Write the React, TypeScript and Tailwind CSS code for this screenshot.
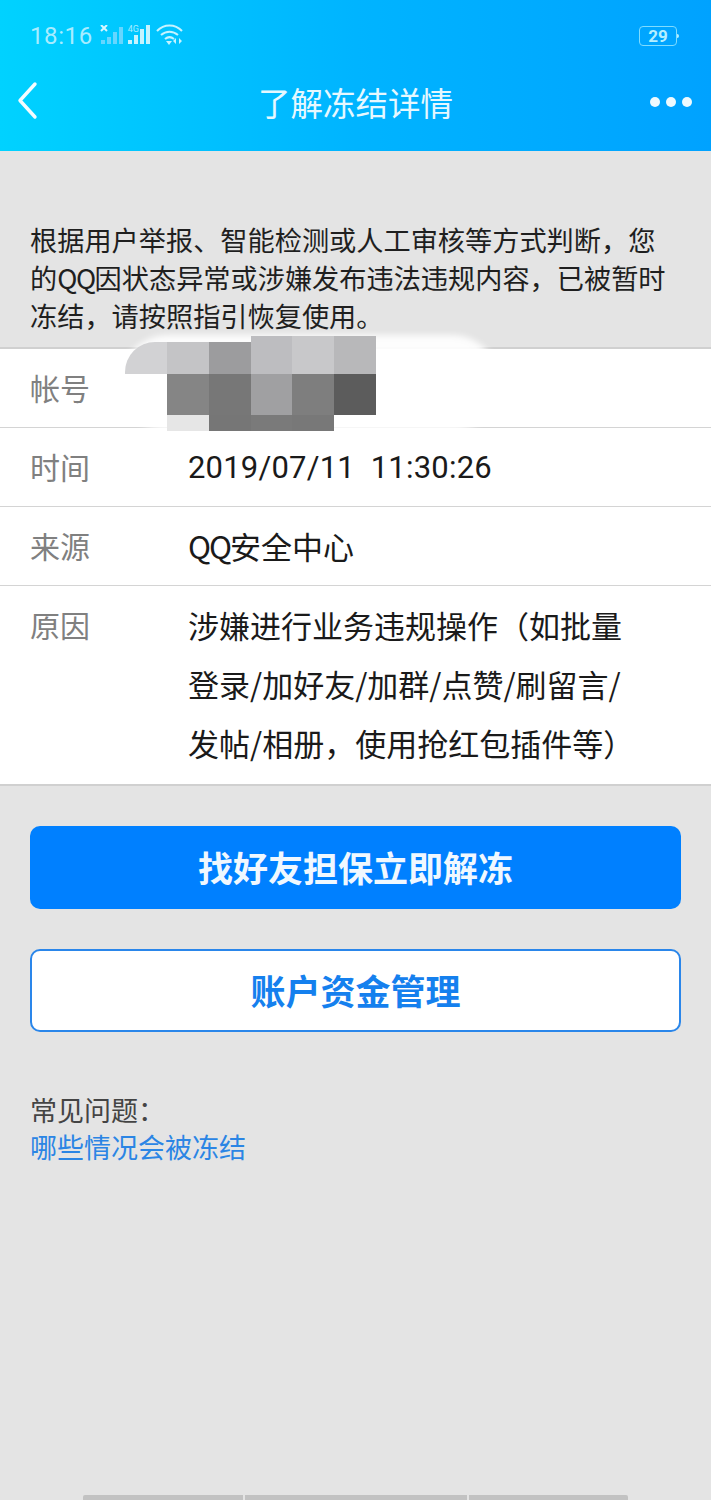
const font = { fontFamily: '"Noto Sans CJK SC", "Noto Sans", sans-serif' }

// mosaic over the account number, colours read off the reference
const mosaic = [
  { top: '-top-[6px]', h: 'h-[38px] items-end', cells: ['h-[32px] bg-[#c4c4c6]', 'h-[32px] bg-[#9c9c9e]', 'h-full bg-[#bdbdc0]', 'h-full bg-[#c8c8ca]', 'h-full bg-[#b8b8ba]'] },
  { top: 'top-[32px]', h: 'h-[41px]', cells: ['h-full bg-[#858585]', 'h-full bg-[#777777]', 'h-full bg-[#a0a0a2]', 'h-full bg-[#7e7e7e]', 'h-full bg-[#5c5c5c]'] },
  { top: 'top-[73px]', h: 'h-[16px]', cells: ['h-full bg-[#e6e6e6]', 'h-full bg-[#767676]', 'h-full bg-[#7a7a7a]', 'h-full bg-[#787878]', 'h-full bg-transparent'] },
]

function StatusBar() {
  return (
    <div className="flex h-[72px] items-start justify-between pt-[20px] pl-[30px] pr-[32px]">
      <div className="flex items-center gap-[7px] text-[#a8ecff]">
        <span className="text-[24px] leading-[32px] tracking-[0.6px]" style={{ fontFamily: 'Roboto, sans-serif' }}>18:16</span>
        <svg width="23" height="20" viewBox="0 0 23 20" className="-mt-[2px]">
          <path d="M1 0l6 6M7 0L1 6" stroke="#d5f6ff" strokeWidth="2" />
          <rect x="1" y="15" width="4" height="4" fill="#66d6ff" />
          <rect x="7" y="12" width="4" height="7" fill="#66d6ff" />
          <rect x="13" y="7" width="4" height="12" fill="#66d6ff" />
          <rect x="19" y="2" width="4" height="17" fill="#66d6ff" />
        </svg>
        <div className="relative -ml-[2px] -mt-[2px] h-[20px] w-[22px]">
          <span className="absolute -top-[1px] left-0 text-[9px] leading-[10px]" style={{ fontFamily: 'Roboto, sans-serif' }}>4G</span>
          <svg width="22" height="20" viewBox="0 0 22 20" className="absolute left-0 top-0">
            <rect x="0" y="15" width="4" height="4" fill="#c5f3ff" />
            <rect x="6" y="10" width="4" height="9" fill="#c5f3ff" />
            <rect x="12" y="4" width="4" height="15" fill="#c5f3ff" />
            <rect x="18" y="0" width="4" height="19" fill="#c5f3ff" />
          </svg>
        </div>
        <svg width="27" height="22" viewBox="0 0 27 22" className="-mt-[2px] -ml-[1px]" fill="none" stroke="#c5f3ff" strokeWidth="2">
          <path d="M1 7c7-7.500 18-7.500 25 0" />
          <path d="M5 11c5-4.500 12-4.500 17 0" />
          <path d="M9 15c3-2.500 6-2.500 9 0" />
          <path d="M10 17h6l-3 4z" fill="#c5f3ff" stroke="none" />
          <path d="M20 14l-3 3 3 3zM23 14l3 3-3 3z" fill="#c5f3ff" stroke="none" />
        </svg>
      </div>
      <div className="mt-[6px] flex items-center">
        <div className="flex h-[20px] w-[38px] items-center justify-center rounded-[4px] border border-[#7fdcff] text-[17px] font-bold leading-none text-[#b5efff]" style={{ fontFamily: 'Roboto, sans-serif' }}>
          29
        </div>
        <div className="h-[4px] w-[2px] rounded-r-sm bg-[#b5efff]" />
      </div>
    </div>
  )
}

function Row({ label, border = true, children }: { label: string; border?: boolean; children: React.ReactNode }) {
  return (
    <div className={`flex pl-[30px] ${border ? 'border-b border-[#d4d4d4]' : 'pb-[2px]'}`}>
      <div className="w-[158px] shrink-0 pt-[8.500px] pb-[10.500px] text-[30px] leading-[59px] text-[#808080]">{label}</div>
      <div className="pt-[8.500px] pb-[10.500px] text-[31px] leading-[59px] text-[#1a1a1a]">{children}</div>
    </div>
  )
}

export default function App() {
  return (
    <div className="relative flex h-[1500px] flex-col overflow-hidden bg-[#e4e4e4]" style={font}>
      <header className="h-[151px] shrink-0 bg-gradient-to-r from-[#00d2ff] via-[#00b4ff] to-[#00a2ff]">
        <StatusBar />
        <div className="relative flex h-[60px] items-center justify-center">
          <svg width="24" height="40" viewBox="0 0 24 40" fill="none" className="absolute left-[16px] top-[9px]">
            <path d="M19 3L4 19.500 19 36" stroke="#f4fcff" strokeWidth="3.400" strokeLinecap="round" strokeLinejoin="round" />
          </svg>
          <h1 className="text-[32.500px] leading-[60px] text-[#e6f8ff]">了解冻结详情</h1>
          <div className="absolute right-[19px] top-[25px] flex gap-[6px]">
            <span className="h-[10px] w-[10px] rounded-full bg-[#eefaff]" />
            <span className="h-[10px] w-[10px] rounded-full bg-[#eefaff]" />
            <span className="h-[10px] w-[10px] rounded-full bg-[#eefaff]" />
          </div>
        </div>
      </header>

      <p className="mt-[69px] px-[30px] text-[27.200px] leading-[38px] text-[#1f1f1f]">
        根据用户举报、智能检测或人工审核等方式判断，您
        <br />
        的<span className="tracking-[-1.500px]">QQ</span>因状态异常或涉嫌发布违法违规内容，已被暂时
        <br />
        冻结，请按照指引恢复使用。
      </p>

      <section className="relative mt-[13px] border-y-2 border-[#d0d0d0] bg-white">
        <Row label="帐号">&nbsp;</Row>
        <Row label="时间">
          <span style={{ fontFamily: 'Roboto, sans-serif' }} className="relative top-[1px] block tracking-[0.2px]">2019/07/11&nbsp;&nbsp;11:30:26</span>
        </Row>
        <Row label="来源">
          <span className="tracking-[-2px]">QQ</span>安全中心
        </Row>
        <Row label="原因" border={false}>
          涉嫌进行业务违规操作（如批量
          <br />
          登录/加好友/加群/点赞/刷留言/
          <br />
          发帖/相册，使用抢红包插件等）
        </Row>

        {/* account number mosaic */}
        <div className="absolute -top-[14px] left-[120px] h-[96px] w-[380px] rounded-[48px] bg-white/90 blur-[3px]" />
        <div className="absolute -top-[7px] left-[125px] h-[32px] w-[60px] rounded-tl-[30px] bg-[#d2d2d4]" />
        <div className="absolute -top-[7px] left-[167px] h-[89px] w-[209px]">
          {mosaic.map((row) => (
            <div key={row.top} className={`absolute left-0 flex w-full ${row.top} ${row.h}`}>
              {row.cells.map((cell, i) => (
                <div key={i} className={`flex-1 ${cell}`} />
              ))}
            </div>
          ))}
        </div>
      </section>

      <div className="mt-[40px] flex flex-col gap-[40px] px-[30px]">
        <button className="h-[83px] rounded-[10px] bg-[#0080ff] pb-[3px] text-[35px] font-bold leading-none text-[#f0f8ff]">
          找好友担保立即解冻
        </button>
        <button className="h-[83px] rounded-[10px] border-2 border-[#2a86ea] bg-white pb-[2px] text-[35px] font-bold leading-none text-[#1580ee]">
          账户资金管理
        </button>
      </div>

      <div className="mt-[59px] px-[30px] text-[27px] leading-[37px]">
        <div className="text-[#444444]">常见问题：</div>
        <a className="block text-[#2b85e4]">哪些情况会被冻结</a>
      </div>

      <div className="absolute bottom-0 left-[83px] flex h-[5px] gap-[2px]">
        <div className="w-[160px] rounded-tl-[2px] bg-[#c2c2c2]" />
        <div className="w-[222px] bg-[#c2c2c2]" />
        <div className="w-[159px] rounded-tr-[2px] bg-[#c2c2c2]" />
      </div>
    </div>
  )
}
